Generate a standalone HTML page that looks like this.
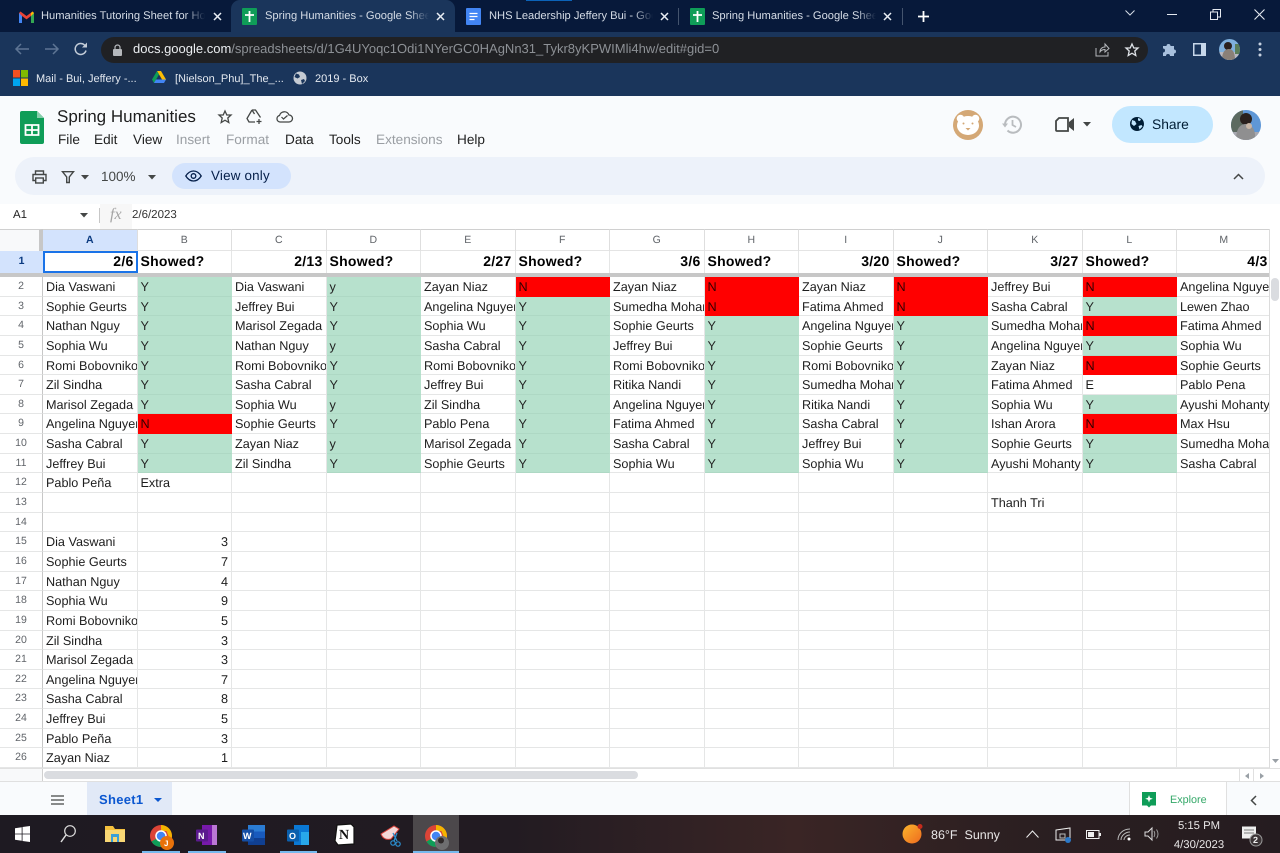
<!DOCTYPE html>
<html><head><meta charset="utf-8"><title>Spring Humanities</title>
<style>
*{box-sizing:border-box}
html,body{margin:0;padding:0}
body{width:1280px;height:853px;overflow:hidden;position:relative;background:#fff;font-family:"Liberation Sans",sans-serif;text-rendering:geometricPrecision}
.a{position:absolute;white-space:nowrap}
svg{position:absolute;overflow:visible}
.tb{color:#d5dce6;font-size:11.150px;top:9px;height:15px;line-height:15px;overflow:hidden;-webkit-mask-image:linear-gradient(90deg,#000 88%,transparent);mask-image:linear-gradient(90deg,#000 88%,transparent)}
.m{top:132px;font-size:13.600px;line-height:16px;color:#1f1f1f}
.dis{color:#9a9ea3}
.bm{color:#e4e9f0;font-size:11px;top:73px;line-height:13px}
#ch,#rh,#g,#r1{position:absolute}
#ch{left:43px;top:229px;display:grid;grid-template-columns:repeat(13,94.5px);height:22px;background:#fff}
#ch span{border-right:1px solid #dedede;border-top:1px solid #d0d0d0;font-size:10.500px;color:#5f6368;text-align:center;line-height:21px;height:22px;border-bottom:1px solid #e4e4e4}
#ch span.s{background:#d3e3fd;color:#0a3a80;font-weight:bold}
#r1{left:43px;top:251px;display:grid;grid-template-columns:repeat(13,94.5px);height:22px;font-size:14px;font-weight:bold;letter-spacing:.25px;color:#000}
#r1 span{line-height:21px;padding:0 3px;text-align:right;border-right:1px solid #e5e6e6;overflow:hidden}
#r1 span.l{text-align:left}
#rh{left:0;top:277px;width:43px;display:grid;grid-auto-rows:19.65px}
#rh span{font-size:10.500px;color:#5f6368;text-align:center;line-height:19px;border-right:1px solid #c7c7c7;border-bottom:1px solid #e5e6e6;background:#fff}
#g{left:43px;top:277px;display:grid;grid-template-columns:repeat(13,94.5px);grid-auto-rows:19.65px;font-size:12.650px;color:#1d1d1d}
#g span{display:block;overflow:hidden;white-space:nowrap;padding:0 0 0 3px;line-height:20px;border-right:1px solid #e5e6e6;border-bottom:1px solid #e5e6e6}
#g .y{background:#b7e1cd;border-color:#aed8c4;border-right-color:#b7e1cd;color:#222}
#g .n{background:#ff0000;border-color:#f00;color:#300}
#g .v{text-align:right;padding-right:3px}
</style></head><body>

<!-- Browser chrome -->
<div class="a" style="left:0;top:0;width:1280px;height:32px;background:#07193a"></div>
<div class="a" style="left:0;top:32px;width:1280px;height:64px;background:#1a355b"></div>
<div class="a" style="left:231px;top:0;width:224px;height:33px;background:#1a355b;border-radius:9px 9px 0 0"></div>
<div class="a" style="left:526px;top:0;width:46px;height:1px;background:#0b63b8"></div>

<svg style="left:19px;top:11px" width="15" height="12" viewBox="0 0 15 12"><path d="M0 2v10h3V5l4.500 3.400L12 5v7h3V2l-1.500-1.500L7.500 5 1.500.5z" fill="#ea4335"/><path d="M0 2v10h3V5z" fill="#4285f4"/><path d="M12 5v7h3V2z" fill="#34a853"/><path d="M15 2l-1.500-1.500L12 2v3z" fill="#fbbc04"/></svg>
<div class="a tb" style="left:41px;width:164px">Humanities Tutoring Sheet for Ho</div>
<svg style="left:213px;top:12px" width="9" height="9"><path d="M1 1l7 7M8 1l-7 7" stroke="#e8edf4" stroke-width="1.500"/></svg>

<div class="a" style="left:242px;top:8px;width:15px;height:17px;background:#0f9d58;border-radius:1px"></div>
<svg style="left:242px;top:8px" width="15" height="17"><path d="M7.500 3v11M3 7h9" stroke="#fff" stroke-width="1.800"/></svg>
<div class="a tb" style="left:265px;width:164px">Spring Humanities - Google Sheets</div>
<svg style="left:436px;top:12px" width="9" height="9"><path d="M1 1l7 7M8 1l-7 7" stroke="#e8edf4" stroke-width="1.500"/></svg>

<div class="a" style="left:466px;top:8px;width:15px;height:17px;background:#4285f4;border-radius:1px"></div>
<svg style="left:466px;top:8px" width="15" height="17"><path d="M3.500 5.500h8M3.500 8.500h8M3.500 11.500h5" stroke="#fff" stroke-width="1.300"/></svg>
<div class="a tb" style="left:489px;width:164px">NHS Leadership Jeffery Bui - Google</div>
<svg style="left:660px;top:12px" width="9" height="9"><path d="M1 1l7 7M8 1l-7 7" stroke="#e8edf4" stroke-width="1.500"/></svg>
<div class="a" style="left:678px;top:8px;width:1px;height:17px;background:#44546e"></div>

<div class="a" style="left:690px;top:8px;width:15px;height:17px;background:#0f9d58;border-radius:1px"></div>
<svg style="left:690px;top:8px" width="15" height="17"><path d="M7.500 3v11M3 7h9" stroke="#fff" stroke-width="1.800"/></svg>
<div class="a tb" style="left:712px;width:164px">Spring Humanities - Google Sheets</div>
<svg style="left:883px;top:12px" width="9" height="9"><path d="M1 1l7 7M8 1l-7 7" stroke="#e8edf4" stroke-width="1.500"/></svg>
<div class="a" style="left:902px;top:8px;width:1px;height:17px;background:#44546e"></div>
<svg style="left:917px;top:10px" width="13" height="13"><path d="M6.500 1v11M1 6.500h11" stroke="#fff" stroke-width="1.800"/></svg>

<svg style="left:1125px;top:10px" width="10" height="6"><path d="M.5.500l4.500 4.500L9.500.5" stroke="#d5dce6" fill="none"/></svg>
<div class="a" style="left:1167px;top:14px;width:10px;height:1px;background:#e4e9f0"></div>
<svg style="left:1210px;top:9px" width="11" height="11"><path d="M.5 3h7v7.500H.5zM3 3V.5h7.500V8H8" stroke="#e4e9f0" fill="none"/></svg>
<svg style="left:1254px;top:9px" width="11" height="11"><path d="M.5.500l10 10M10.500.5l-10 10" stroke="#e4e9f0" stroke-width="1.100"/></svg>

<svg style="left:14px;top:42px" width="16" height="14"><path d="M15 7H2M7 2L2 7l5 5" stroke="#5e7594" stroke-width="1.500" fill="none"/></svg>
<svg style="left:44px;top:42px" width="16" height="14"><path d="M1 7h13M9 2l5 5-5 5" stroke="#5e7594" stroke-width="1.500" fill="none"/></svg>
<svg style="left:74px;top:42px" width="14" height="14"><path d="M12 8.500A5.500 5.500 0 1 1 10.500 3L12 4.500" stroke="#c3ccd8" stroke-width="1.500" fill="none"/><path d="M13 .5v5H8z" fill="#c3ccd8"/></svg>

<div class="a" style="left:101px;top:37px;width:1047px;height:26px;border-radius:13px;background:#202124"></div>
<svg style="left:113px;top:44px" width="9" height="12"><path d="M2 5V3.500a2.500 2.500 0 0 1 5 0V5" stroke="#b5b8bc" fill="none" stroke-width="1.200"/><rect y="5" width="9" height="7" rx="1" fill="#b5b8bc"/></svg>
<div class="a" style="left:133px;top:41px;font-size:13px;line-height:16px;color:#8d9196"><span style="color:#eceff2">docs.google.com</span>/spreadsheets/d/1G4UYoqc1Odi1NYerGC0HAgNn31_Tykr8yKPWIMli4hw/edit#gid=0</div>
<svg style="left:1095px;top:43px" width="15" height="14"><path d="M1 5v8h12V9M5 9c0-3 2-5 5-5V1l4 4.500L10 9V6.500C8 6.500 6 7.500 5 9z" stroke="#b5b8bc" fill="none"/></svg>
<svg style="left:1125px;top:43px" width="14" height="14"><path d="M7 1l1.800 4H13l-3.200 3 1 4.500L7 10.200 3.200 12.500l1-4.500L1 5h4.200z" stroke="#dfe3e8" stroke-width="1.300" fill="none"/></svg>
<svg style="left:1162px;top:42px" width="15" height="15"><path d="M1 4h3.500a2 2 0 0 1 4 0H12v3.500a2 2 0 0 1 0 4V14H8a2 2 0 0 0-4 0H1v-3.500a2 2 0 0 0 0-4z" fill="#a8c0dd"/></svg>
<svg style="left:1193px;top:43px" width="13" height="13"><rect width="13" height="13" fill="#c7d7ea"/><rect x="1.500" y="1.500" width="6.500" height="10" fill="#1a355b"/></svg>
<svg style="left:1219px;top:39px" width="21" height="21"><defs><clipPath id="c1"><circle cx="10.500" cy="10.500" r="10.500"/></clipPath></defs><g clip-path="url(#c1)"><rect width="21" height="21" fill="#7fb0dc"/><rect y="13" width="21" height="8" fill="#b8b8c0"/><circle cx="9" cy="7" r="4" fill="#2b211e"/><path d="M3 21c0-8 3-11 7-11s6 4 6 11z" fill="#8a8078"/><rect x="16" y="5" width="5" height="10" fill="#5a7d5a"/></g></svg>
<svg style="left:1258px;top:42px" width="4" height="15"><circle cx="2" cy="2" r="1.500" fill="#c7d2e0"/><circle cx="2" cy="7.500" r="1.500" fill="#c7d2e0"/><circle cx="2" cy="13" r="1.500" fill="#c7d2e0"/></svg>

<svg style="left:13px;top:70px" width="15" height="16"><rect width="7" height="7.500" fill="#f25022"/><rect x="8" width="7" height="7.500" fill="#7fba00"/><rect y="8.500" width="7" height="7.500" fill="#00a4ef"/><rect x="8" y="8.500" width="7" height="7.500" fill="#ffb900"/></svg>
<div class="a bm" style="left:36px">Mail - Bui, Jeffery -...</div>
<svg style="left:152px;top:71px" width="14" height="13"><path d="M5 0h4l5 8.500h-4z" fill="#fbbc04"/><path d="M5 0L0 8.500 2 12l5-8.500z" fill="#0f9d58"/><path d="M2 12h10l2-3.500H4z" fill="#4285f4"/></svg>
<div class="a bm" style="left:175px">[Nielson_Phu]_The_...</div>
<svg style="left:293px;top:71px" width="14" height="14"><circle cx="7" cy="7" r="6.500" fill="#c5cbd3"/><path d="M3 2.500l3 1 1 2.500-2.500 1.500-3-1.500zM8 9l3-1 1 2-3 3z" fill="#1a355b"/></svg>
<div class="a bm" style="left:315px">2019 - Box</div>

<!-- Sheets header -->
<div class="a" style="left:0;top:96px;width:1280px;height:108px;background:#f9fbfd"></div>
<svg style="left:20px;top:111px" width="24" height="33"><path d="M2 0h15l7 7v24a2 2 0 0 1-2 2H2a2 2 0 0 1-2-2V2a2 2 0 0 1 2-2z" fill="#0f9d58"/><path d="M17 0l7 7h-7z" fill="#87ceac"/><path d="M5.500 14h13v10h-13z" fill="none" stroke="#fff" stroke-width="1.800"/><path d="M5.500 19h13M12 14v10" stroke="#fff" stroke-width="1.800"/></svg>
<div class="a" style="left:57px;top:106px;font-size:17px;line-height:22px;color:#1f1f1f">Spring Humanities</div>
<svg style="left:218px;top:110px" width="14" height="14"><path d="M7 1l1.800 4H13l-3.200 3 1 4.500L7 10.200 3.200 12.500l1-4.500L1 5h4.200z" stroke="#444746" stroke-width="1.300" fill="none"/></svg>
<svg style="left:246px;top:109px" width="17" height="16"><path d="M6 1h3.500l5 7.500M6 1L1 9.500 3 13h6M6 1l2.500 4" stroke="#444746" stroke-width="1.300" fill="none"/><path d="M13 10v5M10.500 12.500h5" stroke="#444746" stroke-width="1.300"/></svg>
<svg style="left:276px;top:110px" width="17" height="13"><path d="M4 12a3.300 3.300 0 0 1-.500-6.500 5 5 0 0 1 9.500-.5 3.500 3.500 0 0 1 0 7z" stroke="#444746" stroke-width="1.300" fill="none"/><path d="M5.500 7l2 2 4-3.500" stroke="#444746" stroke-width="1.200" fill="none"/></svg>

<div class="a m" style="left:58px">File</div>
<div class="a m" style="left:94px">Edit</div>
<div class="a m" style="left:133px">View</div>
<div class="a m dis" style="left:176px">Insert</div>
<div class="a m dis" style="left:226px">Format</div>
<div class="a m" style="left:285px">Data</div>
<div class="a m" style="left:329px">Tools</div>
<div class="a m dis" style="left:376px">Extensions</div>
<div class="a m" style="left:457px">Help</div>

<svg style="left:953px;top:110px" width="30" height="30"><circle cx="15" cy="15" r="15" fill="#d4a876"/><circle cx="7.500" cy="8.500" r="3.800" fill="#fff"/><circle cx="22.500" cy="8.500" r="3.800" fill="#fff"/><ellipse cx="15" cy="15.500" rx="11" ry="9.500" fill="#fff"/><circle cx="10.500" cy="13.500" r="1" fill="#d4a876"/><circle cx="19.500" cy="13.500" r="1" fill="#d4a876"/><path d="M12.500 18l2.500 2.500 2.500-2.500z" fill="#d4a876"/></svg>
<svg style="left:1002px;top:115px" width="20" height="19"><path d="M3 9.500a8 8 0 1 1 2.500 6" stroke="#b9bcbf" stroke-width="2" fill="none"/><path d="M0 8.500h6L3 12.500z" fill="#b9bcbf"/><path d="M10.500 5v5l3.500 2" stroke="#b9bcbf" stroke-width="1.800" fill="none"/></svg>
<svg style="left:1055px;top:117px" width="20" height="15"><path d="M4 1h9v13H2a1 1 0 0 1-1-1V4z" stroke="#444746" stroke-width="1.800" fill="none"/><path d="M14 5l5-4v13l-5-4z" fill="#444746"/></svg>
<svg style="left:1083px;top:122px" width="8" height="5"><path d="M0 0h8L4 4.500z" fill="#444746"/></svg>
<div class="a" style="left:1112px;top:106px;width:101px;height:37px;border-radius:19px;background:#c2e7ff"></div>
<svg style="left:1130px;top:117px" width="14" height="14"><circle cx="7" cy="7" r="7" fill="#001d35"/><path d="M2 3l3 1 1.500 3L4 9 1.500 7zM8.500 9l3-1 1 1.500-3 3zM8 1l3 1-1 2-2-.5z" fill="#c2e7ff"/></svg>
<div class="a" style="left:1152px;top:117px;font-size:13.800px;line-height:16px;color:#001d35">Share</div>
<svg style="left:1231px;top:110px" width="30" height="30"><defs><clipPath id="c2"><circle cx="15" cy="15" r="15"/></clipPath></defs><g clip-path="url(#c2)"><rect width="30" height="30" fill="#5f97d6"/><rect y="0" width="12" height="30" fill="#5c6a60"/><rect y="22" width="30" height="8" fill="#a8a8b0"/><circle cx="15" cy="9" r="6" fill="#2a211e"/><path d="M5 30c0-11 4-16 10-16s10 6 9 16z" fill="#8f8f90"/><circle cx="18" cy="16" r="3" fill="#c9b6a6"/></g></svg>

<div class="a" style="left:15px;top:157px;width:1250px;height:38px;border-radius:19px;background:#edf2fa"></div>
<svg style="left:32px;top:170px" width="15" height="14"><path d="M3.500 4V1h8v3M3.500 10.500H1V4.500h13v6h-2.500" stroke="#444746" stroke-width="1.400" fill="none"/><rect x="3.700" y="8" width="7.600" height="5" stroke="#444746" stroke-width="1.400" fill="none"/></svg>
<svg style="left:62px;top:171px" width="12" height="12"><path d="M.5.700h11L7.300 6v5.500H4.700V6z" stroke="#444746" stroke-width="1.400" fill="none"/></svg>
<svg style="left:81px;top:175px" width="8" height="5"><path d="M0 0h8L4 4.500z" fill="#444746"/></svg>
<div class="a" style="left:101px;top:169px;font-size:13.500px;line-height:16px;color:#444746">100%</div>
<svg style="left:148px;top:175px" width="8" height="5"><path d="M0 0h8L4 4.500z" fill="#444746"/></svg>
<div class="a" style="left:172px;top:163px;width:119px;height:26px;border-radius:13px;background:#d3e3fd"></div>
<svg style="left:185px;top:170px" width="17" height="12"><path d="M.8 6C3 2.500 5.500 1 8.500 1s5.500 1.500 7.700 5c-2.200 3.500-4.700 5-7.700 5S3 9.500.8 6z" stroke="#041e49" stroke-width="1.300" fill="none"/><circle cx="8.500" cy="6" r="2.300" stroke="#041e49" stroke-width="1.300" fill="none"/></svg>
<div class="a" style="left:211px;top:168px;font-size:13.400px;line-height:16px;color:#041e49;letter-spacing:.2px">View only</div>
<svg style="left:1233px;top:173px" width="11" height="7"><path d="M1 6l4.500-4.500L10 6" stroke="#444746" stroke-width="1.500" fill="none"/></svg>

<!-- Formula bar -->
<div class="a" style="left:13px;top:209px;font-size:11.500px;line-height:13px;color:#1f1f1f">A1</div>
<svg style="left:80px;top:213px" width="8" height="5"><path d="M0 0h8L4 4.500z" fill="#444746"/></svg>
<div class="a" style="left:99px;top:208px;width:1px;height:15px;background:#c7c7c7"></div>
<div class="a" style="left:100px;top:204px;width:32px;height:25px;background:#f7f7f7"></div>
<div class="a" style="left:110px;top:206px;font-family:'Liberation Serif',serif;font-style:italic;font-size:16px;line-height:18px;color:#a5a5a5">fx</div>
<div class="a" style="left:132px;top:209px;font-size:11.500px;line-height:13px;color:#333">2/6/2023</div>

<!-- Grid header -->
<div class="a" style="left:0;top:229px;width:43px;height:22px;background:#f8f9fa;border-top:1px solid #d0d0d0;border-right:4px solid #c7c7c7"></div>
<div id="ch"><span class="s">A</span><span>B</span><span>C</span><span>D</span><span>E</span><span>F</span><span>G</span><span>H</span><span>I</span><span>J</span><span>K</span><span>L</span><span>M</span></div>
<div class="a" style="left:0;top:251px;width:43px;height:22px;background:#d3e3fd;color:#0a3a80;font-size:10.500px;font-weight:bold;text-align:center;line-height:21px">1</div>
<div id="r1"><span>2/6</span><span class="l">Showed?</span><span>2/13</span><span class="l">Showed?</span><span>2/27</span><span class="l">Showed?</span><span>3/6</span><span class="l">Showed?</span><span>3/20</span><span class="l">Showed?</span><span>3/27</span><span class="l">Showed?</span><span>4/3</span></div>
<div class="a" style="left:43px;top:251px;width:95px;height:22px;border:2px solid #1a73e8"></div>
<div class="a" style="left:0;top:273px;width:1270px;height:4px;background:#c7c7c7"></div>

<div id="rh"><span>2</span><span>3</span><span>4</span><span>5</span><span>6</span><span>7</span><span>8</span><span>9</span><span>10</span><span>11</span><span>12</span><span>13</span><span>14</span><span>15</span><span>16</span><span>17</span><span>18</span><span>19</span><span>20</span><span>21</span><span>22</span><span>23</span><span>24</span><span>25</span><span>26</span></div>

<div id="g">
<span>Dia Vaswani</span><span class="y">Y</span><span>Dia Vaswani</span><span class="y">y</span><span>Zayan Niaz</span><span class="n">N</span><span>Zayan Niaz</span><span class="n">N</span><span>Zayan Niaz</span><span class="n">N</span><span>Jeffrey Bui</span><span class="n">N</span><span>Angelina Nguyen</span>
<span>Sophie Geurts</span><span class="y">Y</span><span>Jeffrey Bui</span><span class="y">Y</span><span>Angelina Nguyen</span><span class="y">Y</span><span>Sumedha Mohan</span><span class="n">N</span><span>Fatima Ahmed</span><span class="n">N</span><span>Sasha Cabral</span><span class="y">Y</span><span>Lewen Zhao</span>
<span>Nathan Nguy</span><span class="y">Y</span><span>Marisol Zegada</span><span class="y">Y</span><span>Sophia Wu</span><span class="y">Y</span><span>Sophie Geurts</span><span class="y">Y</span><span>Angelina Nguyen</span><span class="y">Y</span><span>Sumedha Mohan</span><span class="n">N</span><span>Fatima Ahmed</span>
<span>Sophia Wu</span><span class="y">Y</span><span>Nathan Nguy</span><span class="y">y</span><span>Sasha Cabral</span><span class="y">Y</span><span>Jeffrey Bui</span><span class="y">Y</span><span>Sophie Geurts</span><span class="y">Y</span><span>Angelina Nguyen</span><span class="y">Y</span><span>Sophia Wu</span>
<span>Romi Bobovnikov</span><span class="y">Y</span><span>Romi Bobovnikov</span><span class="y">Y</span><span>Romi Bobovnikov</span><span class="y">Y</span><span>Romi Bobovnikov</span><span class="y">Y</span><span>Romi Bobovnikov</span><span class="y">Y</span><span>Zayan Niaz</span><span class="n">N</span><span>Sophie Geurts</span>
<span>Zil Sindha</span><span class="y">Y</span><span>Sasha Cabral</span><span class="y">Y</span><span>Jeffrey Bui</span><span class="y">Y</span><span>Ritika Nandi</span><span class="y">Y</span><span>Sumedha Mohan</span><span class="y">Y</span><span>Fatima Ahmed</span><span>E</span><span>Pablo Pena</span>
<span>Marisol Zegada</span><span class="y">Y</span><span>Sophia Wu</span><span class="y">y</span><span>Zil Sindha</span><span class="y">Y</span><span>Angelina Nguyen</span><span class="y">Y</span><span>Ritika Nandi</span><span class="y">Y</span><span>Sophia Wu</span><span class="y">Y</span><span>Ayushi Mohanty</span>
<span>Angelina Nguyen</span><span class="n">N</span><span>Sophie Geurts</span><span class="y">Y</span><span>Pablo Pena</span><span class="y">Y</span><span>Fatima Ahmed</span><span class="y">Y</span><span>Sasha Cabral</span><span class="y">Y</span><span>Ishan Arora</span><span class="n">N</span><span>Max Hsu</span>
<span>Sasha Cabral</span><span class="y">Y</span><span>Zayan Niaz</span><span class="y">y</span><span>Marisol Zegada</span><span class="y">Y</span><span>Sasha Cabral</span><span class="y">Y</span><span>Jeffrey Bui</span><span class="y">Y</span><span>Sophie Geurts</span><span class="y">Y</span><span>Sumedha Mohan</span>
<span>Jeffrey Bui</span><span class="y">Y</span><span>Zil Sindha</span><span class="y">Y</span><span>Sophie Geurts</span><span class="y">Y</span><span>Sophia Wu</span><span class="y">Y</span><span>Sophia Wu</span><span class="y">Y</span><span>Ayushi Mohanty</span><span class="y">Y</span><span>Sasha Cabral</span>
<span>Pablo Peña</span><span>Extra</span><span></span><span></span><span></span><span></span><span></span><span></span><span></span><span></span><span></span><span></span><span></span>
<span></span><span></span><span></span><span></span><span></span><span></span><span></span><span></span><span></span><span></span><span>Thanh Tri</span><span></span><span></span>
<span></span><span></span><span></span><span></span><span></span><span></span><span></span><span></span><span></span><span></span><span></span><span></span><span></span>
<span>Dia Vaswani</span><span class="v">3</span><span></span><span></span><span></span><span></span><span></span><span></span><span></span><span></span><span></span><span></span><span></span>
<span>Sophie Geurts</span><span class="v">7</span><span></span><span></span><span></span><span></span><span></span><span></span><span></span><span></span><span></span><span></span><span></span>
<span>Nathan Nguy</span><span class="v">4</span><span></span><span></span><span></span><span></span><span></span><span></span><span></span><span></span><span></span><span></span><span></span>
<span>Sophia Wu</span><span class="v">9</span><span></span><span></span><span></span><span></span><span></span><span></span><span></span><span></span><span></span><span></span><span></span>
<span>Romi Bobovnikov</span><span class="v">5</span><span></span><span></span><span></span><span></span><span></span><span></span><span></span><span></span><span></span><span></span><span></span>
<span>Zil Sindha</span><span class="v">3</span><span></span><span></span><span></span><span></span><span></span><span></span><span></span><span></span><span></span><span></span><span></span>
<span>Marisol Zegada</span><span class="v">3</span><span></span><span></span><span></span><span></span><span></span><span></span><span></span><span></span><span></span><span></span><span></span>
<span>Angelina Nguyen</span><span class="v">7</span><span></span><span></span><span></span><span></span><span></span><span></span><span></span><span></span><span></span><span></span><span></span>
<span>Sasha Cabral</span><span class="v">8</span><span></span><span></span><span></span><span></span><span></span><span></span><span></span><span></span><span></span><span></span><span></span>
<span>Jeffrey Bui</span><span class="v">5</span><span></span><span></span><span></span><span></span><span></span><span></span><span></span><span></span><span></span><span></span><span></span>
<span>Pablo Peña</span><span class="v">3</span><span></span><span></span><span></span><span></span><span></span><span></span><span></span><span></span><span></span><span></span><span></span>
<span>Zayan Niaz</span><span class="v">1</span><span></span><span></span><span></span><span></span><span></span><span></span><span></span><span></span><span></span><span></span><span></span>
</div>

<!-- Scrollbars -->
<div class="a" style="left:1269px;top:229px;width:11px;height:540px;background:#fff;border-left:1px solid #dcdcdc"></div>
<div class="a" style="left:1271px;top:278px;width:8px;height:23px;border-radius:4px;background:#dadce0"></div>
<svg style="left:1272px;top:759px" width="7" height="5"><path d="M0 0h7L3.500 4z" fill="#9aa0a6"/></svg>
<div class="a" style="left:0;top:768px;width:1280px;height:14px;background:#fff;border-top:1px solid #e0e0e0;border-bottom:1px solid #e0e0e0"></div>
<div class="a" style="left:0;top:769px;width:43px;height:12px;background:#f8f9fa;border-right:1px solid #d0d0d0"></div>
<div class="a" style="left:44px;top:771px;width:594px;height:8px;border-radius:4px;background:#dadce0"></div>
<div class="a" style="left:1239px;top:769px;width:15px;height:12px;border-left:1px solid #e0e0e0;border-right:1px solid #e0e0e0"></div>
<svg style="left:1245px;top:773px" width="4" height="6"><path d="M4 0v6L0 3z" fill="#9aa0a6"/></svg>
<svg style="left:1260px;top:773px" width="4" height="6"><path d="M0 0v6l4-3z" fill="#9aa0a6"/></svg>

<!-- Bottom bar -->
<div class="a" style="left:0;top:782px;width:1280px;height:33px;background:#f9fbfd"></div>
<svg style="left:51px;top:795px" width="13" height="10"><path d="M0 1h13M0 5h13M0 9h13" stroke="#444746" stroke-width="1.300"/></svg>
<div class="a" style="left:87px;top:782px;width:85px;height:33px;background:#e1e9f7"></div>
<div class="a" style="left:99px;top:792px;font-size:13px;font-weight:bold;line-height:15px;color:#0b57d0;letter-spacing:.3px">Sheet1</div>
<svg style="left:154px;top:798px" width="8" height="4"><path d="M0 0h8L4 4z" fill="#0b57d0"/></svg>
<div class="a" style="left:1129px;top:782px;width:98px;height:33px;background:#fff;border-left:1px solid #e0e0e0;border-right:1px solid #e0e0e0"></div>
<svg style="left:1142px;top:792px" width="14" height="16"><path d="M0 0h14v13.500H9L7 15.500 5 13.500H0z" fill="#0f9d58"/><path d="M7 3l1 2.800 2.800 1L8 7.800 7 10.500 6 7.800 3.200 6.800 6 5.800z" fill="#fff"/></svg>
<div class="a" style="left:1170px;top:794px;font-size:10.800px;line-height:13px;color:#34a868">Explore</div>
<svg style="left:1250px;top:795px" width="7" height="11"><path d="M6 1L1.500 5.500 6 10" stroke="#444746" stroke-width="1.500" fill="none"/></svg>

<!-- Taskbar -->
<div class="a" style="left:0;top:815px;width:1280px;height:38px;background:linear-gradient(90deg,#1e1a22 0,#221b22 40%,#3a2525 62%,#2b1f21 80%,#251c20 100%)"></div>
<div class="a" style="left:413px;top:815px;width:46px;height:38px;background:#4c484b"></div>
<div class="a" style="left:142px;top:851px;width:38px;height:2px;background:#76b9ed"></div>
<div class="a" style="left:188px;top:851px;width:38px;height:2px;background:#76b9ed"></div>
<div class="a" style="left:280px;top:851px;width:37px;height:2px;background:#76b9ed"></div>
<div class="a" style="left:413px;top:851px;width:46px;height:2px;background:#76b9ed"></div>
<svg style="left:15px;top:826px" width="15" height="16"><path d="M0 2.200l6.700-1v6.400H0zM7.500 1l7.500-1v7.600H7.500zM0 8.400h6.700v6.400l-6.700-1zM7.500 8.400H15V16l-7.500-1z" fill="#fff"/></svg>
<svg style="left:60px;top:825px" width="16" height="18"><circle cx="10" cy="6" r="5.300" stroke="#ddd" stroke-width="1.200" fill="none"/><path d="M6 10l-5 7" stroke="#ddd" stroke-width="1.500"/></svg>
<svg style="left:105px;top:825px" width="20" height="18"><path d="M0 1h8l2 3h10v13H0z" fill="#f5c13e"/><path d="M0 5h20v12H0z" fill="#f8d775"/><rect x="6" y="9" width="8" height="8" fill="#3aa0da"/><rect x="8" y="12" width="4" height="5" fill="#f8d775"/></svg>
<svg style="left:150px;top:825px" width="25" height="25"><circle cx="11" cy="11" r="11" fill="#db4437"/><path d="M11 11L1.500 16.500A11 11 0 0 0 11 22l5.500-11z" fill="#0f9d58"/><path d="M11 0a11 11 0 0 1 9.500 16.500L16.500 6H11z" fill="#f4b400"/><circle cx="11" cy="11" r="5" fill="#4285f4" stroke="#fff" stroke-width="1.500"/><circle cx="17" cy="18" r="7" fill="#e8710a"/></svg>
<div class="a" style="left:164px;top:839px;font-size:8px;line-height:10px;color:#fff;font-weight:bold">J</div>
<svg style="left:196px;top:825px" width="22" height="21"><path d="M6 0h15v20H6z" fill="#7719aa"/><path d="M16 0h5v20h-5z" fill="#ba77d4"/><rect y="4.500" width="12" height="12" rx="1" fill="#5b1a8e"/></svg>
<div class="a" style="left:198px;top:831px;font-size:9px;line-height:11px;color:#fff;font-weight:bold">N</div>
<svg style="left:242px;top:825px" width="23" height="21"><path d="M6 0h17v20H6z" fill="#2b7cd3"/><path d="M6 13h17v7H6z" fill="#103f91"/><path d="M6 6.500h17V13H6z" fill="#185abd"/><rect y="4.500" width="12" height="12" rx="1" fill="#144ea5"/></svg>
<div class="a" style="left:243px;top:831px;font-size:9px;line-height:11px;color:#fff;font-weight:bold">W</div>
<svg style="left:287px;top:825px" width="23" height="21"><path d="M7 0h15v20H7z" fill="#0a78d4"/><path d="M14 7h8v13h-8z" fill="#28a8ea"/><rect y="4.500" width="12" height="12" rx="1" fill="#0a5fad"/></svg>
<div class="a" style="left:289px;top:831px;font-size:9px;line-height:11px;color:#fff;font-weight:bold">O</div>
<svg style="left:334px;top:824px" width="21" height="21"><path d="M3 1l14-1 3 3v17l-16 1-3-4z" fill="#fff" stroke="#111" stroke-width="1.200"/></svg>
<div class="a" style="left:339px;top:828px;font-family:'Liberation Serif',serif;font-size:14px;line-height:15px;font-weight:bold;color:#111">N</div>
<svg style="left:380px;top:824px" width="22" height="24"><path d="M1 10L14 2l5 3-8 10c-4 1-8 0-10-5z" fill="#f3d7d7" stroke="#d8423b" stroke-width="1"/><path d="M13 9l4 8M17 9l-3 8" stroke="#2b8fd0" stroke-width="1.300"/><circle cx="13" cy="19" r="2.200" fill="none" stroke="#2b8fd0" stroke-width="1.200"/><circle cx="18" cy="20" r="2.200" fill="none" stroke="#2b8fd0" stroke-width="1.200"/></svg>
<svg style="left:425px;top:825px" width="25" height="25"><circle cx="11" cy="11" r="11" fill="#db4437"/><path d="M11 11L1.500 16.500A11 11 0 0 0 11 22l5.500-11z" fill="#0f9d58"/><path d="M11 0a11 11 0 0 1 9.500 16.500L16.500 6H11z" fill="#f4b400"/><circle cx="11" cy="11" r="5" fill="#4285f4" stroke="#fff" stroke-width="1.500"/><circle cx="17" cy="18" r="7" fill="#6e6e70"/><circle cx="16" cy="15.500" r="3" fill="#2f2a2a"/></svg>

<svg style="left:902px;top:824px" width="24" height="20"><defs><linearGradient id="sun" x1="0" y1="0" x2="1" y2="1"><stop offset="0" stop-color="#fbb62c"/><stop offset="1" stop-color="#ee6a1f"/></linearGradient></defs><circle cx="10" cy="10" r="9.500" fill="url(#sun)"/><circle cx="18" cy="2.500" r="2.500" fill="#c42b1c"/></svg>
<div class="a" style="left:931px;top:827px;font-size:12.500px;line-height:16px;color:#e8e6e6">86°F&nbsp; Sunny</div>
<svg style="left:1026px;top:830px" width="13" height="8"><path d="M.5 7.500L6.500 1l6 6.500" stroke="#eee" fill="none"/></svg>
<svg style="left:1055px;top:827px" width="17" height="17"><path d="M1 3l14-2v12H1z" stroke="#eee" fill="none"/><path d="M5 7h5v4H5z" stroke="#bbb" fill="none"/><circle cx="13" cy="13" r="3" fill="#2b78c8"/></svg>
<svg style="left:1086px;top:830px" width="15" height="9"><rect x=".5" y=".5" width="12.500" height="8" stroke="#eee" fill="none"/><rect x="2" y="2" width="6" height="5" fill="#eee"/><rect x="13.500" y="3" width="1.500" height="3" fill="#eee"/></svg>
<svg style="left:1117px;top:828px" width="14" height="13"><path d="M1 12C1 6 6 1 13 1M4 12c0-4 4-8 9-8M7 12c0-2.500 2.500-5 6-5" stroke="#bbb" fill="none"/><circle cx="12" cy="11" r="1.500" fill="#fff"/></svg>
<svg style="left:1144px;top:827px" width="16" height="14"><path d="M1 5h3l4-4v12l-4-4H1z" stroke="#ddd" fill="none"/><path d="M10 4c1 2 1 4 0 6M12.500 2.500c2 3 2 6 0 9" stroke="#999" fill="none"/></svg>
<div class="a" style="left:1160px;top:819px;width:78px;text-align:center;font-size:11.300px;line-height:14px;color:#e8e6e6">5:15 PM</div>
<div class="a" style="left:1160px;top:838px;width:78px;text-align:center;font-size:11.300px;line-height:14px;color:#e8e6e6">4/30/2023</div>
<svg style="left:1241px;top:826px" width="22" height="20"><path d="M1 .5h14v12H1z" fill="#eee"/><path d="M3 4h10M3 7h10" stroke="#555" stroke-width=".8"/><circle cx="15" cy="14" r="6" fill="#3b3436" stroke="#999"/></svg>
<div class="a" style="left:1253px;top:834px;font-size:9px;line-height:12px;font-weight:bold;color:#eee">2</div>
</body></html>
